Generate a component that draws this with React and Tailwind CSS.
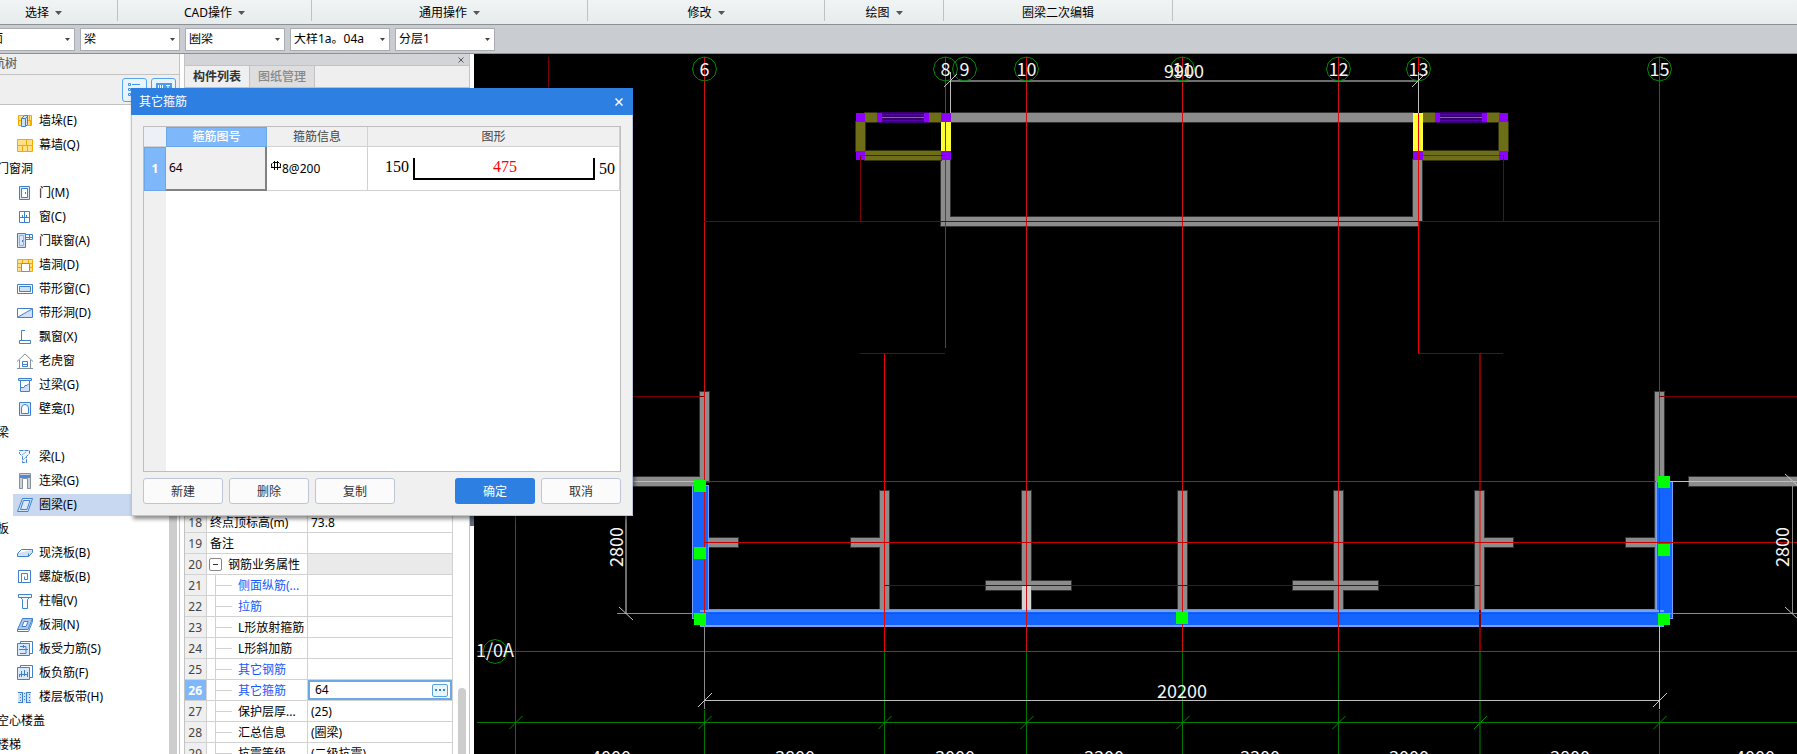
import React, { useState } from 'react';

const ribbonGroups = [
  { text: '选择', width: 'w-[148px]', caret: true },
  { text: 'CAD操作', width: 'w-[194px]', caret: true },
  { text: '通用操作', width: 'w-[276px]', caret: true },
  { text: '修改', width: 'w-[237px]', caret: true },
  { text: '绘图', width: 'w-[119px]', caret: true },
  { text: '圈梁二次编辑', width: 'w-[229px]', caret: false },
];

const filters = [
  { key: 'floor', label: '楼层', value: '屋面' },
  { key: 'category', label: '构件类别', value: '梁' },
  { key: 'type', label: '构件类型', value: '圈梁' },
  { key: 'component', label: '构件', value: '大样1a。04a' },
  { key: 'layer', label: '分层', value: '分层1' },
];

const treeItems = [
  { text: '墙垛(E)', icon: 'pier' },
  { text: '幕墙(Q)', icon: 'curtain' },
  { text: '门窗洞', group: true },
  { text: '门(M)', icon: 'door' },
  { text: '窗(C)', icon: 'window' },
  { text: '门联窗(A)', icon: 'doorWindow' },
  { text: '墙洞(D)', icon: 'wallHole' },
  { text: '带形窗(C)', icon: 'stripWindow' },
  { text: '带形洞(D)', icon: 'stripHole' },
  { text: '飘窗(X)', icon: 'bay' },
  { text: '老虎窗', icon: 'dormer' },
  { text: '过梁(G)', icon: 'lintel' },
  { text: '壁龛(I)', icon: 'niche' },
  { text: '梁', group: true },
  { text: '梁(L)', icon: 'beam' },
  { text: '连梁(G)', icon: 'linkBeam' },
  { text: '圈梁(E)', icon: 'ringBeam', selected: true },
  { text: '板', group: true },
  { text: '现浇板(B)', icon: 'slab' },
  { text: '螺旋板(B)', icon: 'spiral' },
  { text: '柱帽(V)', icon: 'cap' },
  { text: '板洞(N)', icon: 'slabHole' },
  { text: '板受力筋(S)', icon: 'rebarS' },
  { text: '板负筋(F)', icon: 'rebarF' },
  { text: '楼层板带(H)', icon: 'band' },
  { text: '空心楼盖', group: true },
  { text: '楼梯', group: true },
];

const icons = {
  pier: (
    <>
      <path d="M1.5 2.5h13v10h-13z" fill="#ffe08a" stroke="#f5a800" />
      <path d="M1 7.5h14M12.5 3v4M13.5 8v4" stroke="#f5a800" />
      <path d="M4.5 5.5l3-3h3v9l-2 2h-4z" fill="#cfe0f7" stroke="#3f80cf" />
      <path d="M8.5 13V5.5l2-2M4.5 5.5h4" stroke="#3f80cf" />
    </>
  ),
  curtain: (
    <>
      <path d="M.5 2.5h15v12H.5z" fill="#ffe08a" stroke="#f5a800" />
      <path d="M0 8.5h16M9.5 3v5M5.5 9v5M10.500 9v5" stroke="#f5a800" />
    </>
  ),
  door: (
    <>
      <path d="M2.5 1.5h10v13h-10z" fill="#dbe8f9" stroke="#3f80cf" />
      <path d="M4.5 3.5h6v9h-6z" fill="#fff" stroke="#3f80cf" />
      <path d="M8.5 7v2" stroke="#3f80cf" />
    </>
  ),
  window: (
    <>
      <path d="M2.5 2.5h10v11h-10z" stroke="#3f80cf" />
      <path d="M7.5 2v11M2 8.5h11M5.5 6v2M9.5 6v2" stroke="#3f80cf" />
    </>
  ),
  doorWindow: (
    <>
      <path d="M.5.5h8v14h-8z" fill="#cfe0f7" stroke="#3f80cf" />
      <path d="M2.5 2.5h4v10h-4z" fill="#dbe8f9" stroke="#8ab4e8" />
      <path d="M5.5 7v2M8.5 1.5h7v5h-7zM12.5 1v6M9 4.5h6" stroke="#3f80cf" />
    </>
  ),
  wallHole: (
    <>
      <path d="M.5 2.5h15v12H.5z" fill="#ffe08a" stroke="#f5a800" />
      <path d="M0 6.5h16M0 10.5h16M5.5 3v3M11.5 3v3" stroke="#f5a800" />
      <path d="M4.5 6.5h8v8h-8z" fill="#fff" stroke="#e8772a" />
    </>
  ),
  stripWindow: (
    <>
      <path d="M.5 3.5h15v9H.5z" stroke="#3f80cf" />
      <path d="M2.5 5.5h11v5h-11z" fill="#cfe0f7" stroke="#3f80cf" />
    </>
  ),
  stripHole: (
    <>
      <path d="M1 12L15 4v8z" fill="#cfe0f7" />
      <path d="M.5 3.5h15v9H.5zM1 12L15 4" stroke="#3f80cf" />
    </>
  ),
  bay: <path d="M8 1.500H4.5v10M2.5 11.5h11v3h-11z" stroke="#3f80cf" />,
  dormer: (
    <>
      <path d="M0 8.5L8 1l8 7.5M2.5 7v8M13.5 7v8M0 15.5h16" stroke="#83919c" />
      <path d="M5.500 8.500h5v5h-5zM5 11.5h6" stroke="#3f80cf" />
    </>
  ),
  lintel: (
    <>
      <path d="M1.5 1.5h13v2h-13z" fill="#cfe0f7" stroke="#3f80cf" />
      <path d="M4 11l4-1 2-3h2v7H4z" fill="#cfe0f7" />
      <path d="M3.5 4v10.5h9V4" stroke="#3f80cf" />
      <path d="M4 10.5h3l1-2h2l2-2" stroke="#3f80cf" />
    </>
  ),
  niche: (
    <>
      <path d="M2.5 1.5h11v13h-11z" fill="#dbe8f9" stroke="#3f80cf" />
      <path d="M4.5 12.5V7a3.500 3.500 0 0 1 7 0v5.500z" fill="#fff" stroke="#3f80cf" />
    </>
  ),
  beam: (
    <>
      <path d="M2.5 1.5h10v3l-3 3v6h-4v-6l-3-3z" fill="#edf4fd" stroke="#3f80cf" strokeDasharray="4 1" />
      <path d="M5 6l4-3M6 11l3-3" stroke="#8ab4e8" />
    </>
  ),
  linkBeam: (
    <>
      <path d="M2.5.5h11v15h-3v-10h-5v10h-3z" fill="#cdd3d8" stroke="#83919c" />
      <path d="M3 2h10v3H3z" fill="#4d8ad8" />
    </>
  ),
  ringBeam: (
    <path d="M5.5 1.5h10l-4.500 13H.5zM6.5 3.500h6.500l-3 9H3.500z" fill="#dbe8f9" stroke="#3f80cf" />
  ),
  slab: (
    <>
      <path d="M.5 8.5l4-4h11l-4 4z" stroke="#3f80cf" />
      <path d="M.5 8.5v3h11l4-4v-3M11.5 8.5v3" fill="#cfe0f7" stroke="#3f80cf" />
    </>
  ),
  spiral: (
    <path d="M1.5 14V1.5h12v12h-9v-9h6v6h-3v-3M1.5 13.5h3" stroke="#3f80cf" />
  ),
  cap: <path d="M1.5 1.5h13v3h-13zM3.5 4.5l2 2v9h5v-9l2-2" fill="#f4f8fe" stroke="#3f80cf" />,
  slabHole: (
    <>
      <path d="M5.5 1.5h10l-4.500 11H.5z" fill="#a9c8f0" stroke="#3f80cf" />
      <path d="M7 4.500h4l-2 5H5z" fill="#fff" stroke="#3f80cf" />
      <path d="M.5 12.5v2h11l4-10v-3" stroke="#3f80cf" />
    </>
  ),
  rebarS: (
    <>
      <path d="M3.5 2V.5h12v12H13" stroke="#3f80cf" />
      <path d="M.5 2.5h12v12H.5z" fill="#dbe8f9" stroke="#3f80cf" />
      <path d="M3 5.5h6v7H3M2 8.5h9M6.500 4v3" stroke="#3f80cf" />
    </>
  ),
  rebarF: (
    <>
      <path d="M3.5 2V.5h12v12H13" stroke="#3f80cf" />
      <path d="M.5 2.5h12v12H.5z" fill="#dbe8f9" stroke="#3f80cf" />
      <path d="M2 9.5h9M4.5 6v6M7.5 5v6M2.5 10v2M10.5 7v5" stroke="#3f80cf" />
    </>
  ),
  band: (
    <>
      <path d="M1 3h13v11H1z" fill="#cfe0f7" />
      <path d="M1 3.5h4M10 3.5h4M1 13.5h4M10 13.5h4M5.5 3v11M9.5 3v11" stroke="#3f80cf" />
      <path d="M3.5 5v8M7.5 4v9M12.5 5v8" stroke="#3f80cf" strokeDasharray="1 2" />
    </>
  ),
};

const properties = [
  { no: 18, name: '终点顶标高(m)', value: '73.8' },
  { no: 19, name: '备注', value: '' },
  { no: 20, name: '钢筋业务属性', group: true },
  { no: 21, name: '侧面纵筋(...', value: '', child: true, blue: true },
  { no: 22, name: '拉筋', value: '', child: true, blue: true },
  { no: 23, name: 'L形放射箍筋', value: '', child: true },
  { no: 24, name: 'L形斜加筋', value: '', child: true },
  { no: 25, name: '其它钢筋', value: '', child: true, blue: true },
  { no: 26, name: '其它箍筋', value: '64', child: true, blue: true, active: true },
  { no: 27, name: '保护层厚...', value: '(25)', child: true },
  { no: 28, name: '汇总信息', value: '(圈梁)', child: true },
  { no: 29, name: '抗震等级', value: '(二级抗震)', child: true },
];

// [x, y, width, height]
const walls = [
  [951, 113, 462, 9],
  [941, 217, 477, 9],
  [941, 160, 9, 66],
  [1413, 160, 9, 61],
  [700, 392, 9, 90],
  [620, 477, 80, 9],
  [1655, 392, 9, 225],
  [1689, 477, 120, 9],
  [709, 538, 29, 9],
  [851, 538, 29, 9],
  [880, 491, 9, 119],
  [1475, 491, 9, 119],
  [1484, 538, 29, 9],
  [1626, 538, 30, 9],
  [1022, 491, 9, 119],
  [1178, 491, 9, 119],
  [1334, 491, 9, 119],
  [986, 581, 85, 9],
  [1293, 581, 85, 9],
  [709, 609, 947, 1],
];

const olives = [
  [865, 113, 12, 9],
  [929, 113, 12, 9],
  [856, 122, 9, 29],
  [865, 151, 76, 9],
  [1423, 113, 12, 9],
  [1487, 113, 12, 9],
  [1499, 122, 9, 29],
  [1423, 151, 76, 9],
];

const columns = [
  [856, 113, 9, 9],
  [941, 113, 10, 9],
  [856, 151, 9, 9],
  [941, 151, 10, 9],
  [1499, 113, 9, 9],
  [1413, 151, 10, 9],
  [1499, 151, 9, 9],
];

// [x1, y1, x2, y2, color]
const axisLines = [
  [548.5, 57, 548.5, 100, '#7d0000'],
  [704.5, 57, 704.5, 613, '#d01010'],
  [945.5, 57, 945.5, 348, '#d01010'],
  [1026.5, 57, 1026.5, 651, '#d01010'],
  [1182.5, 57, 1182.5, 651, '#d01010'],
  [1338.5, 57, 1338.5, 651, '#d01010'],
  [1418.5, 57, 1418.5, 353, '#f00000'],
  [1659.5, 57, 1659.5, 613, '#f00000'],
  [884.5, 353, 884.5, 651, '#f00000'],
  [515.5, 500, 515.5, 651, '#f00000'],
  [704, 221.5, 1659, 221.5, '#7d0000'],
  [860.5, 155, 860.5, 221, '#7d0000'],
  [860, 155.5, 945, 155.5, '#8d0000'],
  [1503.5, 155, 1503.5, 221, '#7d0000'],
  [1418, 155.5, 1503, 155.5, '#c00000'],
  [860, 353.5, 945, 353.5, '#7d0000'],
  [1418, 353.5, 1503, 353.5, '#7d0000'],
  [620, 396.5, 704, 396.5, '#7d0000'],
  [1659, 396.5, 1810, 396.5, '#7d0000'],
  [704, 481.5, 1656, 481.5, '#e00000'],
  [704, 542.5, 1810, 542.5, '#c80000'],
  [884, 585.5, 1480, 585.5, '#7d0000'],
  [709, 613.5, 1656, 613.5, '#a0284a'],
  [477, 651.5, 1810, 651.5, '#f00000'],
];

const axisLabels = [
  { x: 704.5, text: '6' },
  { x: 945.5, text: '8' },
  { x: 964.5, text: '9' },
  { x: 1026.5, text: '10' },
  { x: 1182.5, text: '11' },
  { x: 1338.5, text: '12' },
  { x: 1418.5, text: '13' },
  { x: 1659.5, text: '15' },
];

const spans = [
  { x: 611, text: '4000' },
  { x: 795, text: '3800' },
  { x: 955, text: '3000' },
  { x: 1104, text: '3300' },
  { x: 1260, text: '3300' },
  { x: 1409, text: '3000' },
  { x: 1570, text: '3800' },
  { x: 1755, text: '4000' },
];

const greenColumns = [
  [515.5, 652],
  [704.5, 710],
  [884.5, 652],
  [1026.5, 652],
  [1182.5, 652],
  [1338.5, 652],
  [1659.5, 710],
];

const handles = [
  [694, 480],
  [694, 547],
  [694, 613],
  [1176, 612],
  [1658, 476],
  [1658, 544],
  [1658, 613],
];

// axis bubbles are drawn as coarse polygons
const bubble = (cx, cy) => {
  const points = [];
  for (let i = 0; i < 12; i++) {
    const angle = (Math.PI * 2 * i) / 12;
    points.push(`${(cx + 12 * Math.sin(angle)).toFixed(1)},${(cy + 12 * Math.cos(angle)).toFixed(1)}`);
  }
  return points.join(' ');
};

const Rects = ({ items, fill, stroke }) =>
  items.map(([x, y, w, h]) => (
    <g key={`${x}-${y}-${w}`}>
      {stroke && <rect x={x - 1} y={y - 1} width={w + 2} height={h + 2} fill={stroke} />}
      <rect x={x} y={y} width={w} height={h} fill={fill} />
    </g>
  ));

const WindowSymbol = ({ x }) => (
  <g>
    <rect x={x} y="112" width="52" height="11" fill="#35006b" />
    <rect x={x} y="113" width="5" height="9" fill="#8c00ff" />
    <rect x={x + 47} y="113" width="5" height="9" fill="#8c00ff" />
    <path d={`M${x + 5} 114.500h42M${x + 5} 120.500h42`} stroke="#5a00a8" />
    <path d={`M${x + 5} 117.500h42`} stroke="#a83cff" />
  </g>
);

const Drawing = () => (
  <svg
    className="block h-full w-full bg-black"
    viewBox="474 54 1323 700"
    preserveAspectRatio="xMinYMin slice"
    role="img"
    aria-label="圈梁平面图"
  >
    <g shapeRendering="crispEdges">
      <Rects items={walls.slice(0, -1)} stroke="#333333" fill="none" />
      <Rects items={walls} fill="#8c8c8c" />
      <Rects items={olives} stroke="#33330c" fill="none" />
      <Rects items={olives} fill="#6e6e18" />
      <rect x="941" y="122" width="10" height="29" fill="#ffff32" />
      <rect x="1413" y="113" width="10" height="38" fill="#ffff32" />
      <Rects items={columns} fill="#8c00ff" />
      <WindowSymbol x={877} />
      <WindowSymbol x={1435} />
      <rect x="1022" y="586" width="9" height="24" fill="#d2d2d2" />

      <rect x="692" y="485" width="17" height="134" fill="#1464ff" />
      <rect x="692.500" y="485.500" width="16" height="133" fill="none" stroke="#78a0f5" />
      <rect x="1656" y="481" width="17" height="138" fill="#1464ff" />
      <rect x="1656.500" y="481.500" width="16" height="137" fill="none" stroke="#78a0f5" />
      <rect x="700" y="610" width="964" height="17" fill="#1464ff" />
      <path d="M700 611h964M700 626h964" stroke="#78a0f5" strokeWidth="2" />

      {greenColumns.map(([x, y]) => (
        <path key={x} d={`M${x} ${y}V760`} stroke="#007800" />
      ))}
      <path d="M1480 652V760" stroke="#004600" strokeWidth="2" />
      <path d="M477 722.500H1810" stroke="#008200" />
      <path d="M1480 353V651" stroke="#820000" strokeWidth="2" />
      <path d="M1480 491V610" stroke="#c84646" strokeWidth="2" />
      {axisLines.map(([x1, y1, x2, y2, color]) => (
        <line key={`${x1}-${y1}-${x2}`} x1={x1} y1={y1} x2={x2} y2={y2} stroke={color} />
      ))}

      <path d="M950 81H1418M626 500V613" stroke="#6e6e6e" strokeWidth="2" />
      <path d="M950.500 72V113M1418.500 72V113M704.500 700.500H1659M1659.500 620V709M633 481.500H694M1670 481.500H1810" stroke="#bebebe" />
      <path d="M704.500 620V709M617 613.500H694M1670 613.500H1810M1792.500 481V613" stroke="#8c8c8c" />
      {handles.map(([x, y]) => (
        <rect key={`${x}-${y}`} x={x} y={y} width="12" height="12" fill="#00ff00" />
      ))}
    </g>

    <g fill="none" stroke="#008c00">
      {axisLabels.map(({ x }) => (
        <polygon key={x} points={bubble(x, 69)} />
      ))}
      <polygon points={bubble(495, 651.5)} />
      {[515.5, 704.5, 884.5, 1026.5, 1182.5, 1338.5, 1480, 1659.5].map((x) => (
        <path key={x} d={`M${x - 6} 729l13-13`} />
      ))}
    </g>
    <g fill="none" stroke="#c8c8c8">
      <path d="M944 87l13-13M1412 87l13-13M698 707l14-14M1653 707l14-14" />
      <path d="M619 607l14 13M1785 474l14 13M1785 607l14 13" />
    </g>

    <g
      className="font-['Noto_Sans_CJK_SC',sans-serif] text-[18px]"
      fill="#f5f5f5"
      textAnchor="middle"
    >
      {axisLabels.map(({ x, text }) => (
        <text key={text} x={x} y="76">{text}</text>
      ))}
      <text x="1184" y="78">9900</text>
      <text x="1182" y="698">20200</text>
      <text x="495" y="657">1/0A</text>
      <text transform="translate(623 547) rotate(-90)">2800</text>
      <text transform="translate(1789 547) rotate(-90)">2800</text>
      {spans.map(({ x, text }) => (
        <text key={x} x={x} y="764">{text}</text>
      ))}
    </g>
  </svg>
);

const Caret = () => (
  <svg className="h-1 w-[7px]" viewBox="0 0 7 4" aria-hidden="true">
    <path d="M0 0h7L3.500 4z" fill="#555" />
  </svg>
);

const Ribbon = () => (
  <nav className="-ml-1 flex h-[25px] shrink-0 border-b border-[#8d9195] bg-linear-to-b from-[#f1f4f5] to-[#e6ebeb]">
    {ribbonGroups.map((group) => (
      <div key={group.text} className={`${group.width} flex h-[21px] shrink-0 border-r border-[#bfc2c4]`}>
        <button className="flex flex-1 items-center justify-center gap-[6px] pt-1">
          {group.text}
          {group.caret && <Caret />}
        </button>
      </div>
    ))}
  </nav>
);

const FilterBar = () => (
  <div className="flex h-[29px] shrink-0 items-center gap-[5px] border-b border-[#8d9195] bg-[#c9ccd1] pl-px">
    {filters.map((filter) => (
      <div key={filter.key} className="relative h-[23px] w-[100px] shrink-0">
        <select
          aria-label={filter.label}
          defaultValue={filter.value}
          className="h-full w-full appearance-none border border-[#a9acb0] bg-white pl-[3px] leading-none text-black"
        >
          <option>{filter.value}</option>
        </select>
        <svg className="pointer-events-none absolute top-[10px] right-[5px] h-[3px] w-[5px]" viewBox="0 0 5 3">
          <path d="M0 0h5L2.500 3z" fill="#444" />
        </svg>
      </div>
    ))}
  </div>
);

const ComponentTree = () => (
  <aside className="flex w-[206px] shrink-0 flex-col border-r border-[#c3c3c3] bg-white">
    <h2 className="h-[21px] shrink-0 border-b border-[#c3c3c3] bg-[#efefef] pl-[7px] leading-[20px] font-medium text-[#666]">
      导航树
    </h2>
    <div className="flex h-[30px] shrink-0 items-center justify-end gap-1 border-b border-[#c3c3c3] bg-[#efefef] pr-[3px]">
      <button aria-label="列表" className="flex h-6 w-[25px] items-center justify-center rounded-[3px] border border-[#56a3f0] bg-[#e8f3fe]">
        <svg className="h-4 w-4" viewBox="0 0 16 16" fill="none" stroke="#3b93ee">
          <path d="M1.500 1.500h2v2h-2zM1.500 6.500h2v2h-2zM1.500 11.500h2v2h-2zM5 2.500h8M5 7.500h8M5 12.500h8" />
        </svg>
      </button>
      <button aria-label="图标" className="flex h-6 w-[25px] items-center justify-center rounded-[3px] border border-[#56a3f0] bg-[#e8f3fe]">
        <svg className="h-4 w-4" viewBox="0 0 16 16" fill="none">
          <path d="M0 1h16v14H0z" fill="#4c9df0" />
          <path d="M2.500 3v3M4.500 3v3M6.500 3v3M10 3.500h4M12 3v3" stroke="#fff" />
        </svg>
      </button>
    </div>
    <div className="flex min-h-0 flex-1 overflow-hidden">
      <ul className="flex-1 pt-1">
        {treeItems.map((item) => (
          <li key={item.text} className="flex h-6 items-center">
            {item.group ? (
              <span className="pl-[23px]">{item.text}</span>
            ) : (
              <a
                href="#tree"
                className={`ml-[39px] flex h-[22px] flex-1 items-center gap-[6px] pl-1 ${item.selected ? 'bg-[#c8d8f0]' : ''}`}
              >
                <svg className="h-4 w-4" viewBox="0 0 16 16" fill="none" aria-hidden="true">
                  {icons[item.icon]}
                </svg>
                {item.text}
              </a>
            )}
          </li>
        ))}
      </ul>
      <div className="mr-[2px] w-2 bg-[#cdcdcd]" />
    </div>
  </aside>
);

const PropertyRow = ({ row }) => {
  const [value, setValue] = useState(row.value || '');
  return (
    <tr className="h-[21px]">
      <th
        scope="row"
        className={`border-r border-b border-[#d2d2d2] p-0 pt-[2px] pr-1 text-right ${row.active ? 'bg-[#7fb8fa] font-bold text-white' : 'bg-[#efefef] font-normal text-[#444]'}`}
      >
        {row.no}
      </th>
      <td className="border-r border-b border-[#d2d2d2] p-0 whitespace-nowrap">
        {row.child && (
          <div className="flex h-5 items-center">
            <span className="ml-2 h-5 w-px bg-[#d2d2d2]" />
            <span className="mr-[6px] h-px w-4 bg-[#d2d2d2]" />
            <span className={`pt-[2px] ${row.blue ? 'text-[#145aff]' : ''}`}>{row.name}</span>
          </div>
        )}
        {row.group && (
          <div className="flex h-5 items-center gap-[6px] pl-[2px]">
            <button
              aria-label="折叠"
              className="flex h-[13px] w-[13px] items-center justify-center rounded-[2px] border border-[#888] bg-white"
            >
              <span className="h-px w-[5px] bg-[#333]" />
            </button>
            <span className="pt-[2px]">{row.name}</span>
          </div>
        )}
        {!row.child && !row.group && <div className="pt-[2px] pl-[3px]">{row.name}</div>}
      </td>
      <td className={`border-r border-b border-[#d2d2d2] p-0 ${row.group ? 'bg-[#eaeaea]' : ''}`}>
        {row.active ? (
          <div className="flex h-5 items-center border-2 border-[#6aa9e6] bg-white pr-[2px]">
            <input
              aria-label={row.name}
              value={value}
              onChange={(e) => setValue(e.target.value)}
              className="w-0 flex-1 pl-[5px] outline-none"
            />
            <button
              aria-label="更多"
              className="flex h-[13px] w-4 items-center justify-center gap-[2px] rounded-[2px] border border-[#56a3e0] bg-[#eaf4fd]"
            >
              <span className="h-[2px] w-[2px] bg-[#3b83c6]" />
              <span className="h-[2px] w-[2px] bg-[#3b83c6]" />
              <span className="h-[2px] w-[2px] bg-[#3b83c6]" />
            </button>
          </div>
        ) : (
          <div className="pt-[2px] pl-[3px]">{row.value}</div>
        )}
      </td>
    </tr>
  );
};

const ComponentPanel = () => (
  <section className="flex w-[286px] shrink-0 flex-col overflow-hidden border-x border-[#c3c3c3] bg-white">
    <div className="flex h-[11px] shrink-0 items-center justify-end bg-[#d3d4d8] pr-[5px]">
      <button aria-label="关闭面板" className="flex">
        <svg className="h-[6px] w-[6px]" viewBox="0 0 6 6" stroke="#555">
          <path d="M.5.5l5 5M5.500.5l-5 5" />
        </svg>
      </button>
    </div>
    <div role="tablist" className="flex h-[23px] shrink-0 border-y border-[#c3c3c3] bg-[#efefef]">
      <button role="tab" aria-selected="true" className="w-[65px] border-r border-[#c3c3c3] pt-px font-bold text-[#333]">
        构件列表
      </button>
      <button role="tab" aria-selected="false" className="w-[65px] border-r border-[#c3c3c3] bg-[#dedede] pt-px font-medium text-[#888]">
        图纸管理
      </button>
    </div>
    <div className="h-[424px] shrink-0" />
    <div className="flex min-h-0 flex-1">
      <table className="h-0 w-[268px] table-fixed border-separate border-spacing-0">
        <colgroup>
          <col className="w-[22px]" />
          <col className="w-[101px]" />
          <col />
        </colgroup>
        <tbody>
          {properties.map((row) => (
            <PropertyRow key={row.no} row={row} />
          ))}
        </tbody>
      </table>
      <div className="mt-[176px] ml-[5px] w-2 rounded-t bg-[#cdcdcd]" />
    </div>
  </section>
);

const StirrupDialog = () => {
  const [code, setCode] = useState('64');
  return (
    <div
      role="dialog"
      aria-label="其它箍筋"
      className="absolute top-[88px] left-[131px] flex h-[428px] w-[502px] flex-col bg-[#f0f0f0] shadow-[2px_3px_4px_rgba(0,0,0,0.45)]"
    >
      <div className="flex h-[27px] shrink-0 items-center justify-between bg-[#2d80e2] pr-[10px] pl-2 text-white">
        <h1>其它箍筋</h1>
        <button aria-label="关闭">
          <svg className="h-2 w-2" viewBox="0 0 8 8" stroke="#fff" strokeWidth="1.500">
            <path d="M.5.5l7 7M7.500.5l-7 7" />
          </svg>
        </button>
      </div>
      <div className="flex flex-1 flex-col gap-[6px] border border-t-0 border-[#b9c5d8] px-[11px] pt-[11px] pb-[11px]">
        <div className="flex-1 border border-[#bebebe] bg-white">
          <table className="h-full w-full table-fixed border-separate border-spacing-0">
            <colgroup>
              <col className="w-[22px]" />
              <col className="w-[101px]" />
              <col className="w-[101px]" />
              <col />
            </colgroup>
            <thead>
              <tr className="h-5 text-[#444]">
                <td className="border-b border-[#d2d2d2] bg-[#edf1f7]" />
                <th className="border border-[#6aa9e6] bg-[#7fb8fa] p-0 font-medium text-white">箍筋图号</th>
                <th className="border-r border-b border-[#d2d2d2] bg-[#f0f0f0] p-0 font-normal">箍筋信息</th>
                <th className="border-r border-b border-[#d2d2d2] bg-[#f0f0f0] p-0 font-normal">图形</th>
              </tr>
            </thead>
            <tbody>
              <tr className="h-11">
                <th scope="row" className="border border-[#6aa9e6] bg-[#7fb8fa] p-0 font-bold text-white">1</th>
                <td className="border-r-2 border-b-2 border-[#828282] bg-[#f0f0f0] p-0">
                  <input
                    aria-label="箍筋图号"
                    value={code}
                    onChange={(e) => setCode(e.target.value)}
                    className="w-full pl-[3px] outline-none"
                  />
                </td>
                <td className="border-r border-b border-[#d2d2d2] p-0">
                  <div className="flex items-start gap-px pl-1">
                    <svg className="h-[10px] w-[10px]" viewBox="0 0 10 10" fill="none" stroke="#000">
                      <path d="M3.500 0v9M6.500 0v9M0 6.500h10M2 1.500h6M1.500 2L.5 3v2l1 1.500M8.500 2l1 1v2l-1 1.500" />
                    </svg>
                    8@200
                  </div>
                </td>
                <td className="border-r border-b border-[#d2d2d2] p-0">
                  <svg className="block h-[43px] w-full" viewBox="0 0 251 43">
                    <path d="M46 11v21h180V11" fill="none" stroke="#000" strokeWidth="2" />
                    <g className="font-['Liberation_Serif',serif] text-[16px]">
                      <text x="17" y="25">150</text>
                      <text x="125" y="25" fill="#ff0000">475</text>
                      <text x="231" y="27">50</text>
                    </g>
                  </svg>
                </td>
              </tr>
              <tr>
                <td className="bg-[#f0f0f0]" />
                <td colSpan={3} />
              </tr>
            </tbody>
          </table>
        </div>
        <div className="flex h-[26px] shrink-0 gap-[6px] text-[#333]">
          <button className="w-20 rounded-[3px] border border-[#bcc6d6] bg-[#fbfbfb] pt-[2px]">新建</button>
          <button className="w-20 rounded-[3px] border border-[#bcc6d6] bg-[#fbfbfb] pt-[2px]">删除</button>
          <button className="w-20 rounded-[3px] border border-[#bcc6d6] bg-[#fbfbfb] pt-[2px]">复制</button>
          <button className="ml-auto w-20 rounded-[3px] bg-[#2d80e2] pt-[2px] text-white">确定</button>
          <button className="w-20 rounded-[3px] border border-[#bcc6d6] bg-[#fbfbfb] pt-[2px]">取消</button>
        </div>
      </div>
    </div>
  );
};

// the bars and the tree run off the left edge of the window
const App = () => (
  <div className="relative h-screen overflow-hidden bg-white font-['Noto_Sans','Noto_Sans_CJK_SC',sans-serif] text-[12px] leading-4 text-black">
    <div className="-ml-[26px] flex h-full flex-col">
      <Ribbon />
      <FilterBar />
      <div className="flex min-h-0 flex-1">
        <ComponentTree />
        <div className="w-1 shrink-0" />
        <ComponentPanel />
        <div className="w-1 shrink-0 pt-[462px]">
          <div className="h-[10px] bg-[#5f6b7a]" />
        </div>
        <main className="min-w-0 flex-1">
          <Drawing />
        </main>
      </div>
    </div>
    <StirrupDialog />
  </div>
);

export default App;
